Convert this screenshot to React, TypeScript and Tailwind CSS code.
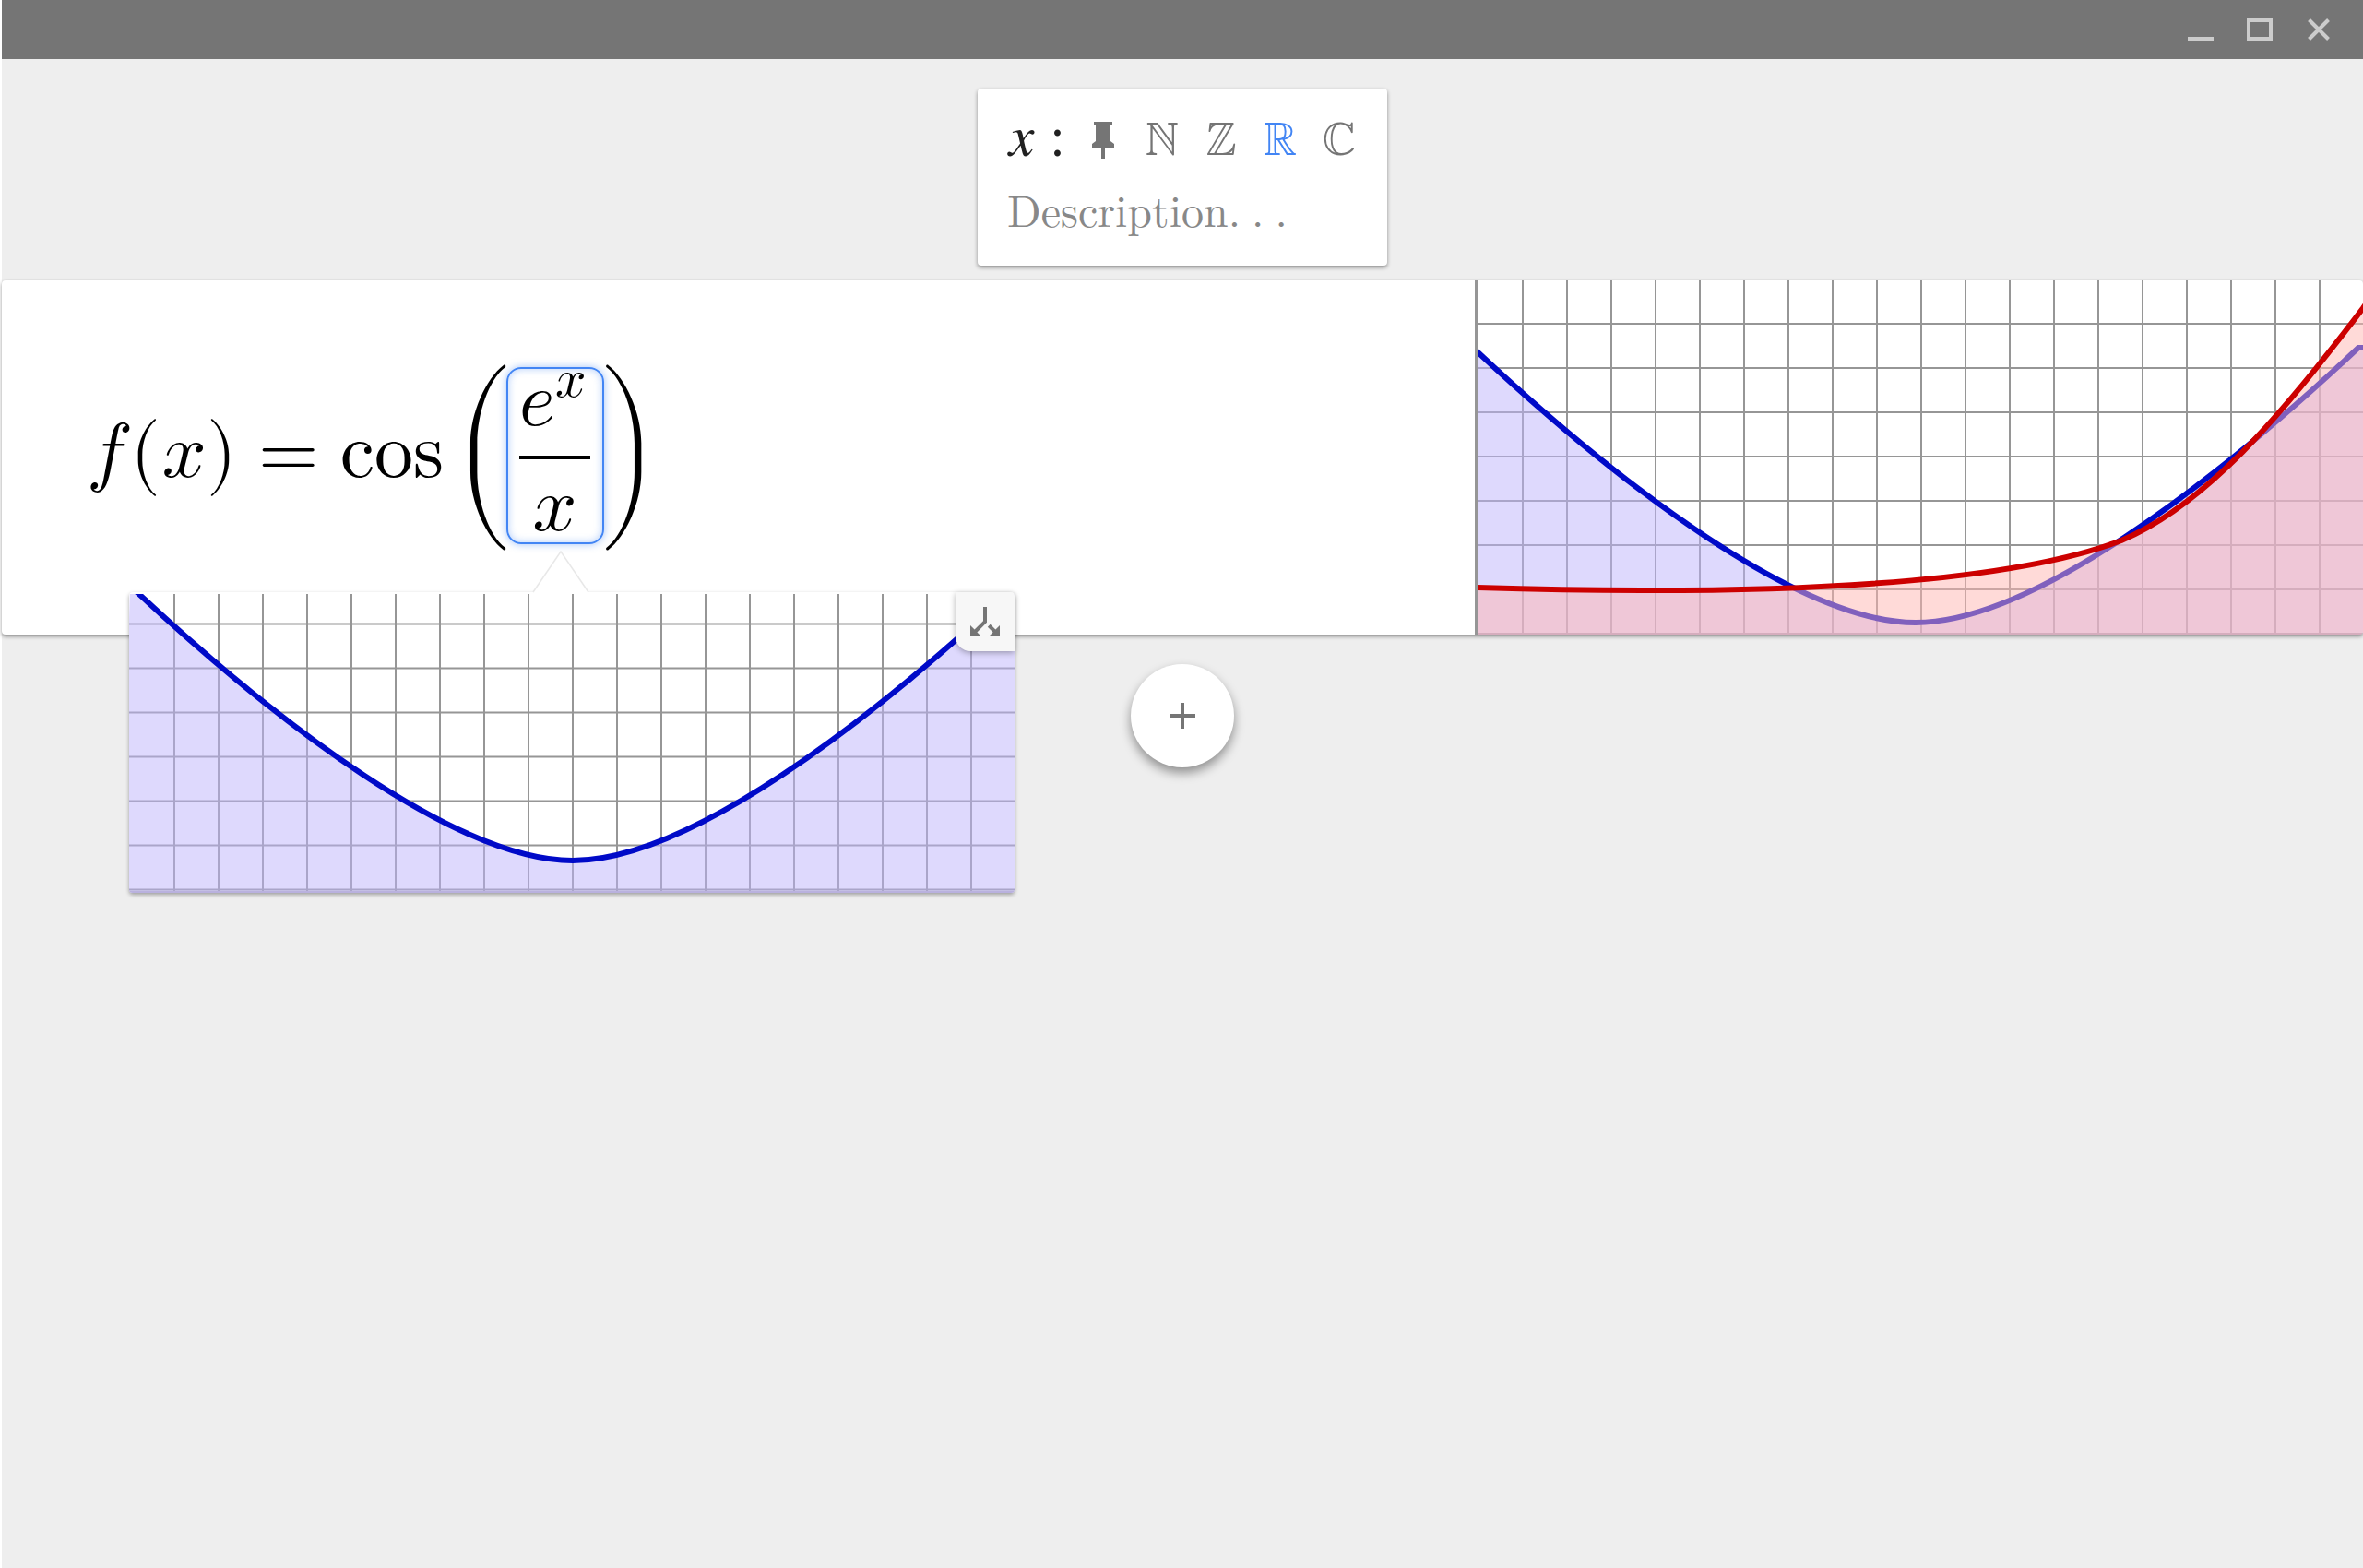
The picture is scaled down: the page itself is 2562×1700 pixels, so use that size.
import type { ReactNode } from "react";
import { MdCallSplit } from "react-icons/md";

const WIDE_BLUE = "M-5 73C155 223 350 371 475 371S795 223 955 73H970";
const WIDE_RED = "M-10 333H0C230 340 548 339 698 282C788 244 870 149 960 30L970 16";
const POPUP_BLUE = "M1 -7C161 143 356 291 481 291S801 143 961 -7";

function Curve({ d, stroke, fill }: { d: string; stroke: string; fill: string }) {
  return (
    <>
      <path d={`${d}V400H-10Z`} fill={fill} fillOpacity={0.5} />
      <path d={d} fill="none" stroke={stroke} strokeWidth={6} />
    </>
  );
}

function Plot({ label, height, firstRow, top = 0, children }: { label: string; height: number; firstRow: number; top?: number; children: ReactNode }) {
  const columns = Array.from({ length: 19 }, (_, i) => 48 + i * 48);
  const rows = Array.from({ length: Math.ceil((height - firstRow) / 48) }, (_, i) => firstRow + i * 48);
  return (
    <svg role="img" aria-label={label} viewBox={`0 0 960 ${height}`} className="block w-full">
      {columns.map((x) => (
        <rect key={x} x={x} y={top} width={2} height={height - top} fill="#969696" />
      ))}
      {rows.map((y) => (
        <rect key={y} x={0} y={y} width={960} height={2} fill="#969696" />
      ))}
      {children}
    </svg>
  );
}

function TitleBar() {
  return (
    <header className="flex h-16 items-center justify-end bg-[#757575] pr-4 text-[#cccccc]">
      <button type="button" aria-label="Minimize" className="size-16">
        <svg viewBox="0 0 64 64"><path d="M18 42h28" stroke="currentColor" strokeWidth="4" /></svg>
      </button>
      <button type="button" aria-label="Maximize" className="size-16">
        <svg viewBox="0 0 64 64"><path d="M20 22h24v20H20z" fill="none" stroke="currentColor" strokeWidth="4" /></svg>
      </button>
      <button type="button" aria-label="Close" className="size-16">
        <svg viewBox="0 0 64 64"><path d="M21.500 21.500l21 21M42.500 21.500l-21 21" stroke="currentColor" strokeWidth="4" /></svg>
      </button>
    </header>
  );
}

function VariableCard() {
  const sets = [
    { symbol: "ℕ", name: "Natural numbers", color: "text-[#757575]" },
    { symbol: "ℤ", name: "Integers", color: "text-[#757575]" },
    { symbol: "ℝ", name: "Real numbers", color: "text-[#4285f4]" },
    { symbol: "ℂ", name: "Complex numbers", color: "text-[#757575]" },
  ];
  return (
    <section className="mx-auto flex h-48 w-[444px] flex-col rounded bg-white pt-6 font-['FreeSerif','Liberation_Serif',serif] shadow-[0_2px_4px_rgba(0,0,0,0.4)]">
      <div className="flex h-16 items-center pr-5 pl-8">
        <span className="w-[46px] pb-1 pl-0.5 text-[62px] leading-16 text-[#212121] italic">x</span>
        <span className="w-[26px] pb-1 text-[62px] leading-16 text-[#212121]">:</span>
        <button type="button" aria-label="Pin variable" className="size-16 text-[#757575]">
          <svg viewBox="0 0 64 64"><path d="M22 12h20v4h-2v17l4 3v4H34v12h-4V40H20v-4l4-3V16h-2z" fill="currentColor" /></svg>
        </button>
        {sets.map((set) => (
          <button key={set.name} type="button" aria-label={set.name} className={`flex size-16 items-center justify-center text-[52px] leading-16 ${set.color}`}>
            {set.symbol}
          </button>
        ))}
      </div>
      <input
        aria-label="Description"
        placeholder={"Description.\u2005.\u2005."}
        className="mt-2.5 h-16 w-full px-8 font-['Latin_Modern_Roman','Latin_Modern_Math','Liberation_Serif',serif] text-5xl outline-none placeholder:text-[#888888]"
      />
    </section>
  );
}

function Delimiter({ children }: { children: string }) {
  return (
    <math className="font-['Latin_Modern_Math','Liberation_Serif',serif]">
      <mo stretchy="true" symmetric="true" minsize="198px" maxsize="204px" lspace="0" rspace="0">{children}</mo>
    </math>
  );
}

function Formula() {
  return (
    <div className="flex h-96 items-center pl-[92px] font-['Latin_Modern_Math','Liberation_Serif',serif] text-[84px] text-black">
      <math className="font-['Latin_Modern_Math','Liberation_Serif',serif]">
        <mi>f</mi>
        <mo stretchy="false" lspace="6px" rspace="2px">(</mo>
        <mi>x</mi>
        <mo stretchy="false">)</mo>
        <mo>=</mo>
        <mi>cos</mi>
      </math>
      <span className="w-1" />
      <Delimiter>(</Delimiter>
      <button type="button" aria-label="e to the x over x" className="-mr-2 -ml-2.5 mb-1 flex h-48 w-[106px] flex-col items-center justify-center rounded-2xl border-2 border-[#4285f4] pb-2 shadow-[0_0_8px_rgba(66,133,244,0.5),inset_0_0_8px_rgba(66,133,244,0.4)]">
        <math display="block" className="font-['Latin_Modern_Math','Liberation_Serif',serif]">
          <mfrac><msup><mi>e</mi><mi>x</mi></msup><mi>x</mi></mfrac>
        </math>
      </button>
      <Delimiter>)</Delimiter>
    </div>
  );
}

function Popup() {
  return (
    <div className="absolute top-[338px] left-[138px] w-[960px] rounded bg-white shadow-[0_2px_4px_rgba(0,0,0,0.35)]">
      <svg viewBox="0 0 64 46" className="absolute -top-[45px] left-[436px] w-16" aria-hidden="true">
        <path d="M2 45L32 1L62 45V46H2Z" fill="white" />
        <path d="M2 45L32 1L62 45" fill="none" stroke="#e8e8e8" strokeWidth="1.500" />
      </svg>
      <div className="overflow-hidden rounded">
        <Plot label="Graph of the selected fraction" height={326} firstRow={33.5} top={2}>
          <svg y={2} width={960} height={324} viewBox="0 2 960 324">
            <Curve d={POPUP_BLUE} stroke="#000ac8" fill="#bdb3fb" />
          </svg>
          <rect y={324} width={960} height={2} fill="#b9b1de" />
        </Plot>
      </div>
      <button type="button" aria-label="Split plot" className="absolute top-0 right-0 flex size-16 items-center justify-center rounded-tr rounded-bl-2xl bg-[#f7f7f7] text-[#757575] shadow-[0_2px_6px_rgba(0,0,0,0.3)]">
        <MdCallSplit className="size-12 -scale-y-100" />
      </button>
    </div>
  );
}

export default function App() {
  return (
    <div className="min-h-screen border-l-2 border-white bg-[#eeeeee]">
      <TitleBar />
      <main className="flex flex-col pt-8">
        <VariableCard />
        <section className="relative mt-4 flex rounded bg-white shadow-[0_2px_4px_rgba(0,0,0,0.4)]">
          <div className="min-w-0 flex-1"><Formula /></div>
          <div className="w-[3px] bg-[#969696]" />
          <div className="w-3/8 overflow-hidden rounded-r">
            <Plot label="Graph of the function" height={384} firstRow={46}>
              <Curve d={WIDE_BLUE} stroke="#000ac8" fill="#bdb3fb" />
              <Curve d={WIDE_RED} stroke="#cc0000" fill="#ffb5b1" />
            </Plot>
          </div>
          <Popup />
        </section>
        <button type="button" aria-label="Add expression" className="mx-auto mt-8 size-28 rounded-full bg-white text-[#757575] shadow-[0_6px_12px_rgba(0,0,0,0.4)]">
          <svg viewBox="0 0 112 112"><path d="M42 56h28M56 42v28" stroke="currentColor" strokeWidth="4" /></svg>
        </button>
      </main>
    </div>
  );
}
